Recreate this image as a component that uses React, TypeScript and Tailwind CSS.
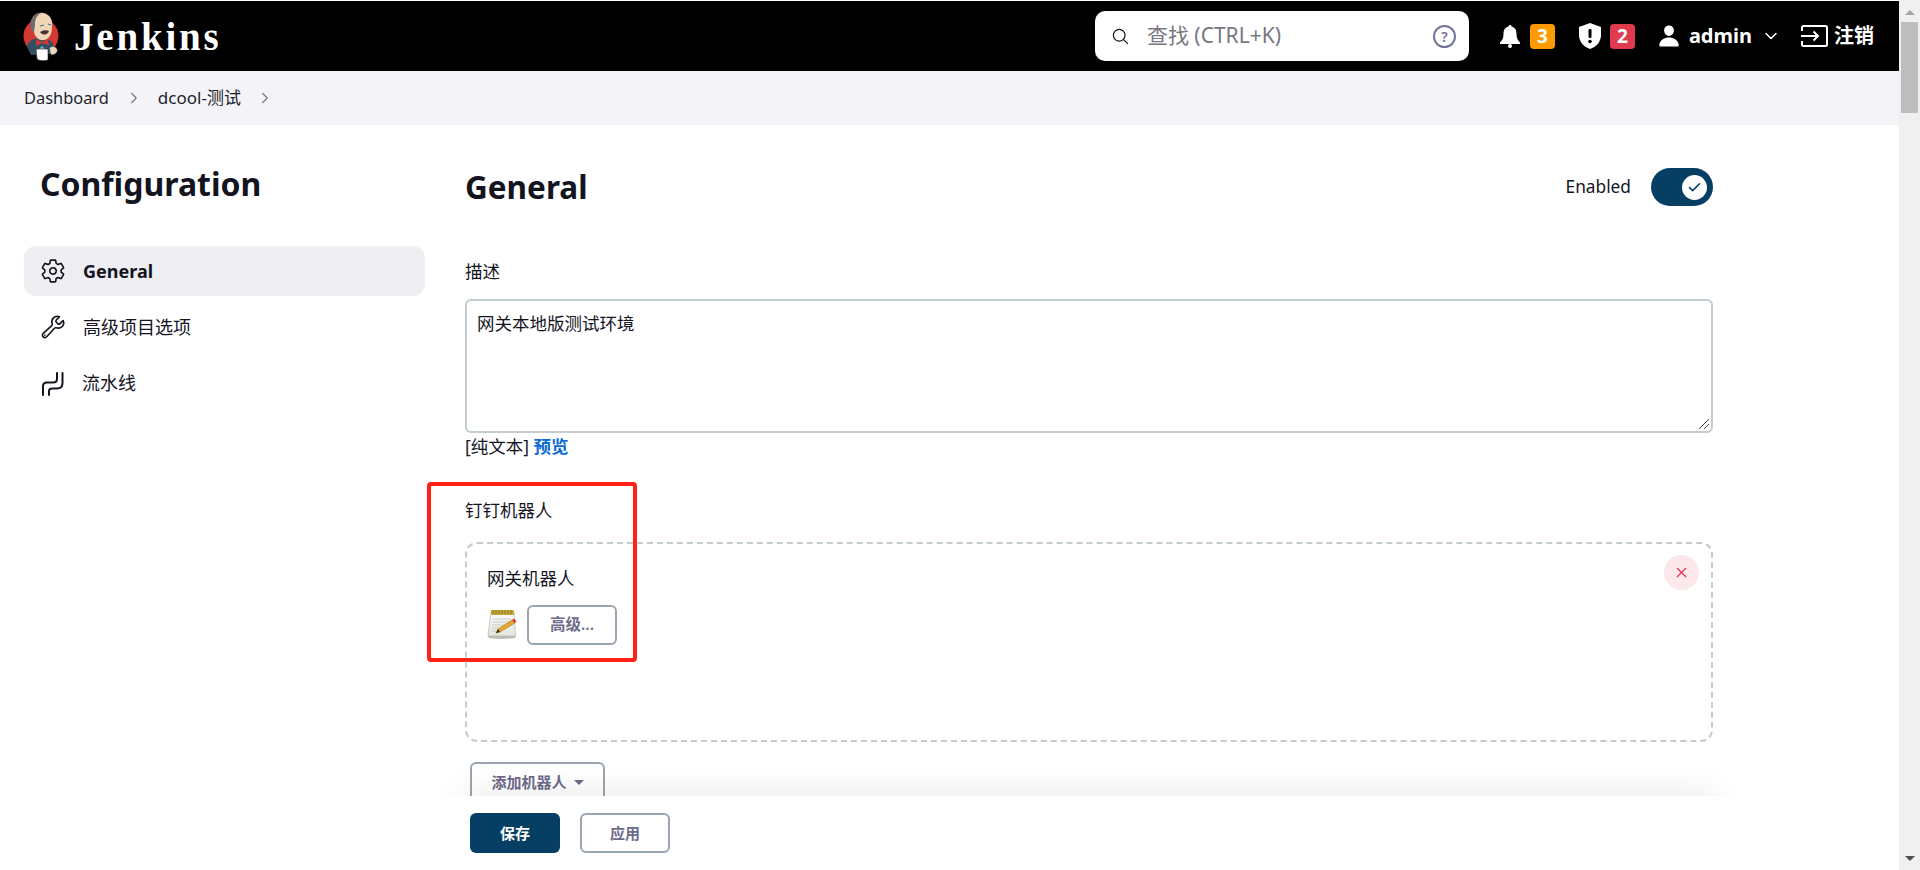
import { Check, ChevronDown, ChevronRight, X } from "lucide-react"
import { IoBuildOutline, IoPerson, IoSearchOutline, IoSettingsOutline } from "react-icons/io5"

const FONT = "font-['Noto_Sans','Noto_Sans_CJK_SC',sans-serif]"

function JenkinsLogo() {
  return (
    <svg width="38" height="50" viewBox="0 0 38 50" className="shrink-0">
      <circle cx="18" cy="25" r="17.5" fill="#d33833" />
      {/* coat */}
      <path d="M4 36 C5 30 10 28 14 27 L26 29 C30 31 31 34 31 38 L27 43 L8 44 Z" fill="#335061" />
      {/* head */}
      <path d="M8 13 C8 5 14 1 20 2 C27 3 30 9 29 16 C29 22 27 28 21 29 C16 30 12 26 11 21 C9 20 8 17 8 13 Z" fill="#f0d6b7" />
      <path d="M8 17 C6 10 10 2 18 2 C13 5 12 9 12 14 L11 21 C9 20 8 19 8 17 Z" fill="#6d6b6d" />
      <path d="M17 15 L21 14 M25 13 L28 14" stroke="#49728b" strokeWidth="1.2" fill="none" />
      <path d="M17 21 C20 19 24 19 26 20 C25 24 20 25 17 21 Z" fill="#49322b" />
      {/* bow tie */}
      <path d="M13 28 L19 31 L25 28 L26 34 L19 32 L13 35 Z" fill="#d33833" />
      <path d="M19 35 L22 38 L19 41 L16 38 Z" fill="#81b0c4" />
      {/* towel and hand */}
      <path d="M13 38 L25 38 L25 49 C21 50 16 50 14 48 Z" fill="#fff" stroke="#222" strokeWidth="0.6" />
      <path d="M27 37 C30 35 33 36 34 39 C34 42 31 44 28 43 Z" fill="#f0d6b7" stroke="#ddd" strokeWidth="0.6" />
    </svg>
  )
}

function NotepadIcon() {
  return (
    <svg width="30" height="32" viewBox="0 0 30 32" className="shrink-0">
      <defs>
        <linearGradient id="pad" x1="0" y1="0" x2="0" y2="1">
          <stop offset="0" stopColor="#fbfbfb" />
          <stop offset="1" stopColor="#e4e4e0" />
        </linearGradient>
      </defs>
      <path d="M1 27 L2 29 Q15 31 28 29 L28.5 27 Z" fill="#bdbdb6" />
      <path d="M4 3 L27 3 L28.5 27 L1 27 Z" fill="url(#pad)" stroke="#b5b5ad" strokeWidth="0.7" />
      <rect x="4" y="1" width="23" height="5" rx="1" fill="#c4a838" />
      <path d="M6 1 V5 M9 1 V5 M12 1 V5 M15 1 V5 M18 1 V5 M21 1 V5 M24 1 V5" stroke="#7f6c20" strokeWidth="0.8" />
      <path d="M6 10 H24 M6 13 H24 M5 16 H17 M5 19 H12 M4.5 22 H9" stroke="#c8c8c2" strokeWidth="0.9" />
      <path d="M9 24 L11 20 L25 11 L28 14 L13 23 Z" fill="#e7a62e" stroke="#9a6a12" strokeWidth="0.5" />
      <path d="M25 11 L28 14 L29.5 12.5 L27 9.5 Z" fill="#d8382f" />
      <path d="M9 24 L11 20 L13 23 Z" fill="#3a2a18" />
    </svg>
  )
}

function PipelineIcon() {
  return (
    <svg width="25" height="25" viewBox="0 0 25 25" fill="none" stroke="#14141f" strokeWidth="2" strokeLinecap="round">
      <path d="M3 24 V15 Q3 11.5 7 11.5 H13 Q17 11.5 17 8 V2" />
      <path d="M9 24 V20 Q9 17.5 12 17.5 H17 Q22.5 17.5 22.5 12 V2" />
    </svg>
  )
}

function Breadcrumb() {
  return (
    <div className="h-[54px] shrink-0 bg-[#f3f3f8] flex items-center pl-6 text-[#1e1e2a]">
      <span className="text-[16.4px]">Dashboard</span>
      <ChevronRight className="w-[18px] h-[18px] ml-[16px] mr-[15px] text-[#77777f]" strokeWidth={1.6} />
      <span className="text-[17px]">dcool-测试</span>
      <ChevronRight className="w-[18px] h-[18px] ml-[15px] text-[#77777f]" strokeWidth={1.6} />
    </div>
  )
}

function Header() {
  return (
    <header className="h-[70px] mt-px shrink-0 bg-black flex items-center text-white">
      <div className="flex items-center ml-[23px] gap-[13px]">
        <JenkinsLogo />
        <span className="font-['Liberation_Serif',serif] font-bold text-[39px] leading-none tracking-[2.8px]">Jenkins</span>
      </div>
      <div className="ml-auto w-[374px] h-[50px] mr-[31px] bg-white rounded-[10px] flex items-center pl-4 pr-[13px] text-[#77777f]">
        <IoSearchOutline className="w-[19px] h-[19px] text-[#14141f] shrink-0" />
        <span className="ml-[17px] text-[21px] flex-1">查找 (CTRL+K)</span>
        <span className="w-[23px] h-[23px] rounded-full border-2 border-[#74749a] text-[#74749a] text-[14px] font-semibold flex items-center justify-center">?</span>
      </div>
      <svg width="20" height="24" viewBox="0 0 20 24" fill="#fff" className="mr-[10px]">
        <path d="M10 1 C11 1 11.5 1.6 11.5 2.6 C15 3.4 16.5 6 16.5 10 C16.5 14 17.5 16 20 18.5 V20 H0 V18.5 C2.5 16 3.5 14 3.5 10 C3.5 6 5 3.4 8.5 2.6 C8.5 1.6 9 1 10 1 Z" />
        <circle cx="10" cy="22" r="2" />
      </svg>
      <span className="w-[25px] h-[25px] rounded-[4px] bg-[#fe9a02] text-[19px] font-bold flex items-center justify-center">3</span>
      <svg width="24" height="28" viewBox="0 0 24 28" className="ml-[23px] mr-[8px]">
        <path d="M12 1 L23 5 V13 C23 20 18 25 12 27 C6 25 1 20 1 13 V5 Z" fill="#fff" />
        <rect x="10.5" y="7" width="3" height="9" rx="1.2" fill="#000" />
        <circle cx="12" cy="19.5" r="1.8" fill="#000" />
      </svg>
      <span className="w-[25px] h-[25px] rounded-[4px] bg-[#e03a4e] text-[19px] font-bold flex items-center justify-center">2</span>
      <IoPerson className="w-[24px] h-[24px] ml-[22px]" />
      <span className="ml-[8px] text-[20px] font-bold">admin</span>
      <ChevronDown className="w-[20px] h-[20px] ml-[9px]" strokeWidth={1.8} />
      <svg width="27" height="22" viewBox="0 0 27 22" fill="none" stroke="#fff" strokeWidth="2" className="ml-[20px]">
        <path d="M1 6 V2.5 Q1 1 2.5 1 H24.5 Q26 1 26 2.5 V19.5 Q26 21 24.5 21 H2.5 Q1 21 1 19.5 V16" />
        <path d="M0 11 H17 M12.5 6.5 L17 11 L12.5 15.5" />
      </svg>
      <span className="ml-[6px] mr-[25px] text-[20px] font-bold">注销</span>
    </header>
  )
}

function Sidebar() {
  return (
    <aside className="w-[401px] ml-6 shrink-0 pt-[25px]">
      <h1 className="ml-4 h-[68px] text-[32px] font-bold leading-[68px] text-[#14141f]">Configuration</h1>
      <nav className="mt-[28px] flex flex-col gap-[6px] text-[18px] text-[#14141f]">
        <div className="h-[50px] bg-[#eeeef3] rounded-[12px] flex items-center pl-[16px] gap-[17px] font-bold">
          <IoSettingsOutline className="w-[26px] h-[26px]" />
          General
        </div>
        <div className="h-[50px] flex items-center pl-[16px] gap-[17px]">
          <IoBuildOutline className="w-[26px] h-[26px]" />
          高级项目选项
        </div>
        <div className="h-[50px] flex items-center pl-[16px] gap-[17px]">
          <PipelineIcon />
          流水线
        </div>
      </nav>
    </aside>
  )
}

function Main() {
  return (
    <main className="w-[1248px] ml-[40px] shrink-0 text-[17.5px] text-[#14141f]">
      <div className="h-[38px] mt-[43px] flex items-center">
        <h2 className="text-[31.5px] font-bold">General</h2>
        <span className="ml-auto text-[17.3px]">Enabled</span>
        <div className="ml-5 w-[62px] h-[38px] rounded-full bg-[#063f63] flex items-center justify-end pr-[6px]">
          <span className="w-[25px] h-[25px] rounded-full bg-white flex items-center justify-center">
            <Check className="w-[15px] h-[15px] text-[#063f63]" strokeWidth={2.6} />
          </span>
        </div>
      </div>
      <div className="mt-[53px] h-[24px] leading-[24px]">描述</div>
      <div className="relative mt-[16px] h-[134px] border-2 border-[#c3ccd1] rounded-[6px] px-[10px] py-[10px] leading-[24px]">
        网关本地版测试环境
        <svg width="12" height="12" viewBox="0 0 12 12" className="absolute right-[1px] bottom-[1px]" stroke="#444" strokeWidth="1">
          <path d="M1 11 L11 1 M6 11 L11 6" />
        </svg>
      </div>
      <div className="mt-px h-[24px] leading-[24px]">
        [纯文本] <span className="font-bold text-[#0b6bd6]">预览</span>
      </div>
      <div className="relative mt-[40px] h-[24px] leading-[24px]">
        钉钉机器人
        {/* red annotation drawn over the screenshot */}
        <div className="absolute left-[-38px] top-[-16px] w-[210px] h-[180px] border-[4px] border-[#ff2116] rounded-[4px]" />
      </div>
      <div className="relative mt-[20px] h-[200px] border-2 border-dashed border-[#c3ccd1] rounded-[12px] pl-[20px] pt-[22px]">
        <div className="h-[24px] leading-[24px]">网关机器人</div>
        <div className="mt-[15px] flex items-center gap-[10px]">
          <NotepadIcon />
          <div className="w-[90px] h-[40px] border-2 border-[#9aa5b1] rounded-[6px] flex items-center justify-center text-[15.5px] font-semibold text-[#6d6b8a]">高级...</div>
        </div>
        <div className="absolute right-[12px] top-[11px] w-[35px] h-[35px] rounded-full bg-[#fce8ea] flex items-center justify-center">
          <X className="w-[17px] h-[17px] text-[#e6294a]" strokeWidth={1.6} />
        </div>
      </div>
      <div className="ml-[5px] mt-[20px] w-[135px] h-[40px] border-2 border-[#9aa5b1] rounded-[6px] flex items-center justify-center gap-[7px] text-[15px] font-semibold text-[#6d6b8a]">
        添加机器人
        <span className="w-0 h-0 border-x-[5px] border-x-transparent border-t-[5px] border-t-[#6d6b8a]" />
      </div>
    </main>
  )
}

function Footer() {
  return (
    <div className="relative h-[74px] bg-white pl-[470px] pt-[17px] flex items-start gap-[20px] text-[15px] font-semibold">
      {/* soft shadow that only shows above the bar */}
      <div className="absolute bottom-full left-[420px] w-[1340px] h-[40px] overflow-hidden">
        <div className="absolute top-full left-[45px] w-[1248px] h-[74px] shadow-[0_0_36px_rgba(0,0,0,0.1)]" />
      </div>
      <div className="w-[90px] h-[40px] rounded-[6px] bg-[#063f63] text-white flex items-center justify-center">保存</div>
      <div className="w-[90px] h-[40px] rounded-[6px] border-2 border-[#9aa5b1] text-[#6d6b8a] flex items-center justify-center">应用</div>
    </div>
  )
}

export default function App() {
  return (
    <div className={`${FONT} h-[870px] flex overflow-hidden bg-white`}>
      <div className="flex-1 min-w-0 flex flex-col">
        <Header />
        <Breadcrumb />
        <div className="flex-1 min-h-0 flex overflow-hidden">
          <Sidebar />
          <Main />
        </div>
        <Footer />
      </div>
      {/* scrollbar */}
      <div className="w-[21px] shrink-0 bg-[#f0f0f0] flex flex-col items-center pt-[10px]">
        <span className="w-0 h-0 border-x-[5px] border-x-transparent border-b-[5px] border-b-[#a3a3a3]" />
        <div className="mt-[7px] w-[17px] h-[91px] bg-[#bdbdbd]" />
        <span className="mt-auto mb-[9px] w-0 h-0 border-x-[5px] border-x-transparent border-t-[5px] border-t-[#505050]" />
      </div>
    </div>
  )
}
